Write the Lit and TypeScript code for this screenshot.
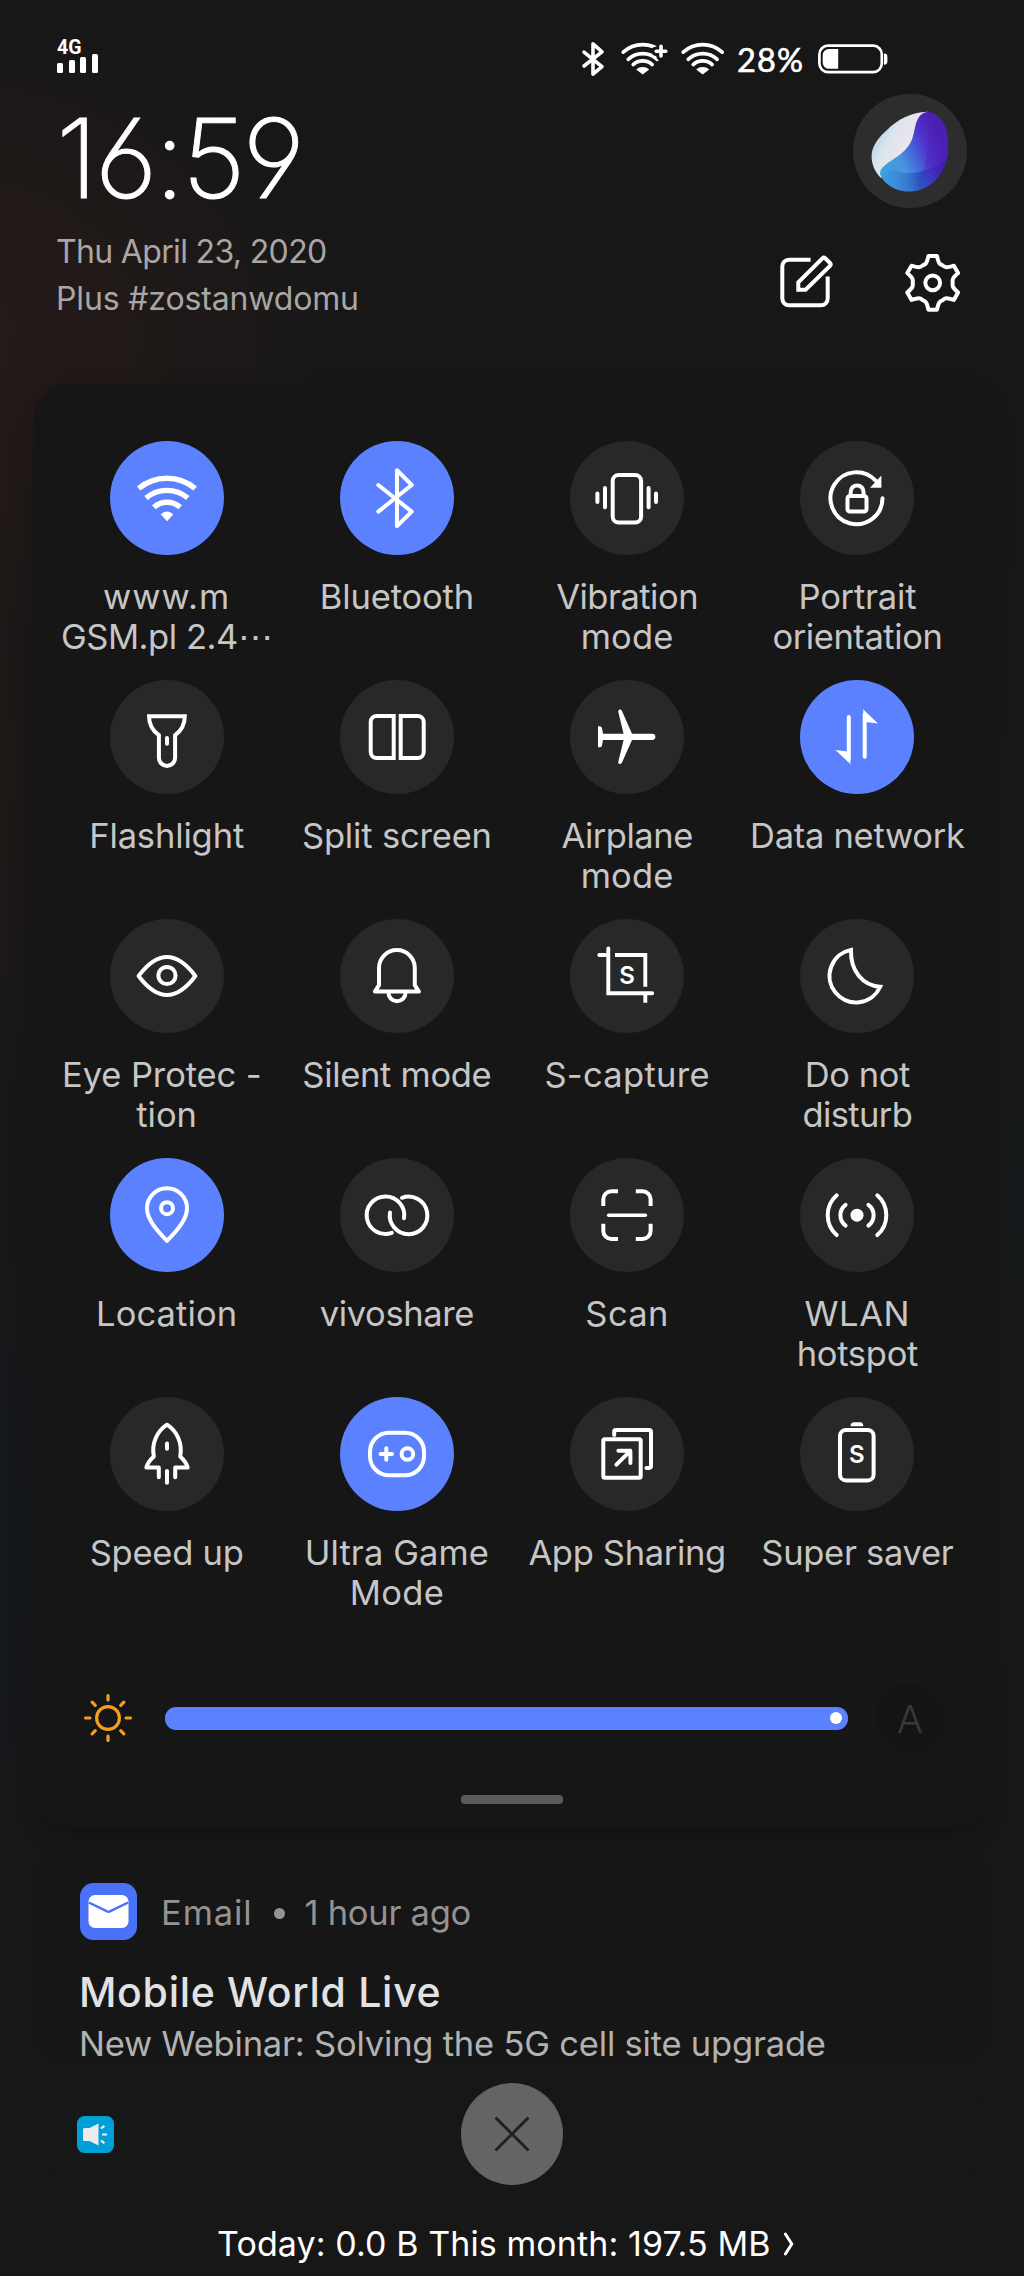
import { LitElement, html, svg, css, type SVGTemplateResult } from "lit";
import { customElement, property } from "lit/decorators.js";
import { classMap } from "lit/directives/class-map.js";

/** A line of label text and its letter spacing in pixels. */
type Line = [text: string, spacing: number];

interface Tile {
  icon: string;
  lines: Line[];
  on?: boolean;
}

const TILES: Tile[] = [
  { icon: "wifi", lines: [["www.m", 1], ["GSM.pl 2.4⋯", -0.46]], on: true },
  { icon: "bluetooth", lines: [["Bluetooth", -0.13]], on: true },
  { icon: "vibration", lines: [["Vibration", -0.5], ["mode", 0.2]] },
  { icon: "portrait", lines: [["Portrait", -0.2], ["orientation", -0.42]] },
  { icon: "flashlight", lines: [["Flashlight", -0.14]] },
  { icon: "split", lines: [["Split screen", -0.17]] },
  { icon: "airplane", lines: [["Airplane", -0.49], ["mode", 0.2]] },
  { icon: "data", lines: [["Data network", -0.26]], on: true },
  { icon: "eye", lines: [["Eye Protec -\u00a0", -0.1], ["tion", 0]] },
  { icon: "bell", lines: [["Silent mode", -0.31]] },
  { icon: "capture", lines: [["S-capture", 0.29]] },
  { icon: "moon", lines: [["Do not", -0.41], ["disturb", -0.6]] },
  { icon: "location", lines: [["Location", 0.1]], on: true },
  { icon: "share", lines: [["vivoshare", -0.4]] },
  { icon: "scan", lines: [["Scan", 0.4]] },
  { icon: "hotspot", lines: [["WLAN", 0.6], ["hotspot", -0.28]] },
  { icon: "rocket", lines: [["Speed up", -0.25]] },
  { icon: "game", lines: [["Ultra Game", 0.1], ["Mode", 0.34]], on: true },
  { icon: "appshare", lines: [["App Sharing", -0.33]] },
  { icon: "saver", lines: [["Super saver", -0.3]] },
];

/** Glyphs drawn on a 114 x 114 disc; strokes are 4 units unless set otherwise. */
const ICONS: Record<string, SVGTemplateResult> = {
  wifi: svg`<g stroke-width="5.4" stroke-linecap="butt">
      <path d="M28.6 47.5A44.2 44.2 0 0 1 85.2 47.5"/><path d="M36 57A32.6 32.6 0 0 1 77.8 57"/><path d="M43.8 66.2A20 20 0 0 1 70.2 66.2"/></g>
      <path class="solid" d="M50.8 73.6C54.5 69.3 59.5 69.3 63.2 73.6L57 80.2Z"/>`,
  bluetooth: svg`<path d="M38.3 44 71.7 70.6 57 85.2V29.2L71.7 44 38.3 70.6"/>`,
  vibration: svg`<rect x="42.7" y="34" width="28.4" height="47.6" rx="6"/>
      <path d="M35 47v19.3M27.4 52.6V61M78.6 47v19.3M86 52.6V61"/>`,
  portrait: svg`<path d="M82.5 57.2A26 26 0 1 1 75.6 39.6"/><path class="solid" d="M81.4 34.5V46.8H70Z"/>
      <rect x="47.5" y="55" width="19" height="15.6" rx="2.4"/><path d="M50.7 55v-4.2a6.4 6.4 0 0 1 12.8 0V55"/>`,
  flashlight: svg`<path stroke-linejoin="miter" d="M39 36.3H74.8C74.8 46 71 51 65.1 55.2V77.8a8.1 8.1 0 0 1-16.2 0V55.2C43 51 39 46 39 36.3Z"/><path d="M57 58v5.8"/>`,
  split: svg`<g stroke-linejoin="miter"><path d="M53.7 36V78H36.7a6 6 0 0 1-6-6V42a6 6 0 0 1 6-6Z"/>
      <path d="M60.7 36V78H77.7a6 6 0 0 0 6-6V42a6 6 0 0 0-6-6Z"/></g>`,
  airplane: svg`<path class="solid" d="M33 53.7H53.6L48.3 32C48 29.3 50.8 28.8 52 31L62 53.7H82.2a3.15 3.15 0 0 1 0 6.3H62L52 82.6C50.8 85 48 84.2 48.3 81.8L53.6 60H33L32 65.5C31.5 67.3 30 67.5 28 67.3V46.3C30 46 31.5 46.3 32 48Z"/>`,
  data: svg`<path d="M48.8 37V80M64.7 34V76.8"/>
      <path class="solid" d="M50.8 84.4 35.4 70 47.5 71.6ZM62.8 29 77.9 43.6 65.5 42Z"/>`,
  eye: svg`<path d="M28.6 57C38 44.5 47 38 57 38S76 44.5 85.4 57C76 69.5 67 76 57 76S38 69.5 28.6 57Z"/><circle cx="57" cy="56.5" r="8.6"/>`,
  bell: svg`<path d="M39 66.2V49a17.9 17.9 0 0 1 35.8 0V66.2L78.9 72.6H34.9Z"/><path d="M48.5 74a8.5 8.2 0 0 0 17 0"/>`,
  capture: svg`<g stroke-linejoin="miter" stroke-width="3.9"><path d="M38.3 29.5V74.3H82.2M29.3 36H35"/><path stroke-linecap="butt" d="M45 36H75.3V67.7M75.3 76V83.8"/></g>
      <text x="57" y="64.5" font-size="24" font-weight="600">S</text>`,
  moon: svg`<path stroke-linejoin="miter" d="M51 30.9A26.5 26.5 0 1 0 80.2 67.8C62.5 66.5 50.4 52 51 30.9Z"/>`,
  location: svg`<path d="M57 82.8C46 71.5 37 61 37 50.2a20 20 0 0 1 40 0C77 61 68 71.5 57 82.8Z"/><circle cx="57" cy="50.2" r="6"/>`,
  share: svg`<path d="M64 60.2A18.8 18.8 0 1 0 51.8 74.9"/><path d="M50 54.4A18.8 18.8 0 1 0 62 39.8"/>`,
  scan: svg`<path stroke-linecap="butt" d="M48 33.3H41.3a8 8 0 0 0-8 8V48M65.8 33.3H72.6a8 8 0 0 1 8 8V48M48 81H41.3a8 8 0 0 1-8-8V65.8M65.8 81H72.6a8 8 0 0 0 8-8V65.8"/><path stroke-width="3.4" d="M38.6 57.2H75.4"/>`,
  hotspot: svg`<circle class="solid" cx="57" cy="57.2" r="6.5"/>
      <path d="M45.6 46.8A13 13 0 0 0 45.6 67.6M68.4 46.8A13 13 0 0 1 68.4 67.6M36.7 37.3A26.5 26.5 0 0 0 36.7 77.1M77.3 37.3A26.5 26.5 0 0 1 77.3 77.1"/>`,
  rocket: svg`<path d="M48.8 80.2V70.6H36.3C37.2 66.6 39.8 63.2 43.8 59.5C41.2 45.5 47.5 34 57 27.7C66.5 34 72.8 45.5 70.2 59.5C74.2 63.2 76.8 66.6 77.7 70.6H65.2V80.2M57 74V85.8M57 46.6V51.8"/>`,
  game: svg`<rect x="30" y="35.7" width="54" height="42.6" rx="19"/><circle cx="67.4" cy="57" r="5.8"/><path d="M46.3 51.3V62.7M40.6 57H52"/>`,
  appshare: svg`<rect x="33.3" y="42.3" width="37.4" height="38.5" rx="1.5"/><path d="M44.2 38V34.4a1.5 1.5 0 0 1 1.5-1.5H79a2 2 0 0 1 2 2V69.4a1.5 1.5 0 0 1-1.5 1.5H76.4"/>
      <path d="M46.4 67.6 60.4 53.8M48.4 53.8H60.4V66"/>`,
  saver: svg`<rect x="40" y="33" width="33.6" height="50.4" rx="6"/><path class="solid" d="M50.5 29.2C50.5 26.5 52 25.3 54 25.3H60C62 25.3 63.3 26.5 63.3 29.2Z"/>
      <text x="56.9" y="66.4" font-size="24" font-weight="600">S</text>`,
};

@customElement("qs-tile")
class QsTile extends LitElement {
  @property({ attribute: false }) tile!: Tile;

  static styles = css`
    :host { display: flex; flex-direction: column; align-items: center; gap: 22px; }
    .disc { width: 114px; height: 114px; border-radius: 50%; background: #282828; }
    .disc.on { background: #5b81ff; }
    .glyph { display: block; width: 114px; height: 114px; fill: none; stroke: #fff; stroke-width: 4; stroke-linecap: round; stroke-linejoin: round; }
    .glyph .solid { fill: #fff; stroke: none; }
    .glyph text { fill: #fff; stroke: none; text-anchor: middle; font-family: Inter, sans-serif; }
    .label { font: 400 34.5px/40px Inter, "Liberation Sans", sans-serif; color: #c6c6c6; text-align: center; white-space: nowrap; }
  `;

  render() {
    const { icon, lines, on } = this.tile;
    return html`
      <div class=${classMap({ disc: true, on: !!on })}>
        <svg class="glyph" viewBox="0 0 114 114">${ICONS[icon]}</svg>
      </div>
      <div class="label">
        ${lines.map(([text, spacing]) => html`<div style="letter-spacing:${spacing}px">${text}</div>`)}
      </div>`;
  }
}

/** Outline of a six-lobed gear around (cx, cy). */
function gearPath(cx: number, cy: number): string {
  const at = (r: number, deg: number) => {
    const a = (deg * Math.PI) / 180;
    return `${(cx + r * Math.cos(a)).toFixed(2)} ${(cy + r * Math.sin(a)).toFixed(2)}`;
  };
  let d = "";
  for (let k = 0; k < 6; k++) {
    const a = -90 + k * 60;
    d += `${k ? "L" : "M"}${at(27.2, a - 9)}L${at(27.2, a + 9)}`;
    d += `C${at(20.2, a + 17)} ${at(19.8, a + 20)} ${at(20, a + 30)}`;
    d += `C${at(19.8, a + 40)} ${at(20.2, a + 43)} ${at(27.2, a + 51)}`;
  }
  return d + "Z";
}

const WIFI_ARCS = svg`
  <path d="M3.2 11.2A29 29 0 0 1 42.2 11.2M8.2 18.3A21.5 21.5 0 0 1 37.2 18.3M13.2 23.6A14 14 0 0 1 32.2 23.6"/>
  <path class="solid" d="M16.2 28.5C19.5 25.2 25.9 25.2 29.2 28.5L22.7 33.6Z"/>`;

@customElement("app-root")
class AppRoot extends LitElement {
  static styles = css`
    :host {
      display: block; width: 1024px; height: 2276px; overflow: hidden; color: #fff;
      font-family: Inter, "Liberation Sans", sans-serif; font-weight: 400;
      background:
        radial-gradient(420px 330px at -60px 330px, #271b19 0%, rgba(39, 27, 25, 0) 100%),
        radial-gradient(50px 420px at 0 760px, #201917 0%, rgba(32, 25, 23, 0) 100%),
        radial-gradient(120px 700px at 0 1550px, #15181b 0%, rgba(21, 24, 27, 0) 100%),
        radial-gradient(120px 900px at 1024px 1200px, #16191b 0%, rgba(22, 25, 27, 0) 100%),
        #171717;
    }
    svg { display: block; flex: none; fill: none; stroke: #fff; stroke-linecap: round; stroke-linejoin: round; }
    svg .solid { fill: #fff; stroke: none; }

    .status { display: flex; justify-content: space-between; height: 94px; padding: 0 136px 0 57px; box-sizing: border-box; }
    .cell { display: flex; flex-direction: column; align-items: flex-start; padding-top: 38px; }
    .net { font: 700 19.5px/19px Roboto, "Liberation Sans", sans-serif; }
    .bars { display: flex; align-items: flex-end; gap: 5.5px; height: 16px; }
    .bars i { width: 6px; border-radius: 1.5px; background: #fff; }
    .bars i:nth-child(1) { height: 10px; }
    .bars i:nth-child(2) { height: 13px; }
    .bars i:nth-child(3) { height: 16px; }
    .bars i:nth-child(4) { height: 19px; }
    .tray { display: flex; align-items: flex-start; padding-top: 41px; stroke-width: 3.6; }
    .tray .plus { margin-left: 15px; }
    .tray .wifi { margin-left: 10px; }
    .pct { width: 68px; margin-left: 11px; font: 400 32.5px/38px Lato, Inter, sans-serif; -webkit-text-stroke: 0.6px #fff; letter-spacing: 1.2px; white-space: nowrap; }
    .battery { margin-left: 12px; }

    .head { display: flex; justify-content: space-between; height: 290px; padding: 0 57px 0 57px; box-sizing: border-box; }
    .when { padding-top: 14px; }
    .clock { font-size: 110px; font-weight: 200; line-height: 100px; letter-spacing: -3px; -webkit-text-stroke: 1px #fff; font-feature-settings: "cv03", "cv04"; margin-left: -1px; }
    .date { margin: 20px 0 0 -1px; font-size: 32px; line-height: 47px; color: #a9a6a5; white-space: nowrap; }
    .date .day { letter-spacing: -0.66px; }
    .date .carrier { letter-spacing: -0.15px; }
    .side { display: flex; flex-direction: column; align-items: flex-end; }
    .avatar { width: 114px; height: 114px; border-radius: 50%; background: #2d2d2d; }
    .tools { display: flex; gap: 66px; margin: 43px 4px 0 0; stroke-width: 4; }

    .panel { margin: 0 34px; height: 1443px; padding: 57px 17px 0; box-sizing: border-box; border-radius: 34px; background: #161616; box-shadow: 0 8px 24px rgba(0, 0, 0, 0.2); }
    .grid { display: grid; grid-template-columns: repeat(4, 230.25px); grid-auto-rows: 239px; justify-content: center; }
    .bright { display: flex; align-items: center; margin: 48px 0 0 31px; }
    .sun { stroke: #f5a01d; }
    .track { display: flex; align-items: center; justify-content: flex-end; width: 683px; height: 23px; margin-left: 31px; padding-right: 6px; box-sizing: border-box; border-radius: 11px; background: #5b81ff; }
    .knob { width: 12px; height: 12px; border-radius: 50%; background: #fff; }
    .auto { width: 68px; height: 68px; margin-left: 28px; border-radius: 50%; background: #141414; color: #393939; font-size: 38.5px; font-weight: 300; line-height: 70px; text-align: center; }
    .grip { width: 102px; height: 9px; margin: 43px auto 0; border-radius: 4px; background: #5a5a5a; }

    .mail { height: 216px; margin: 20px 34px 0; padding: 36px 46px 0; box-sizing: border-box; border-radius: 34px; overflow: hidden; background: #161616; white-space: nowrap; }
    .from { display: flex; align-items: center; font-size: 34.5px; line-height: 57px; color: #939393; }
    .from span { position: relative; top: 1px; }
    .app { margin-left: 24px; letter-spacing: 0.9px; }
    .from .dot { width: 11px; height: 11px; margin: 2px 20px 0 21px; border-radius: 50%; background: #939393; }
    .ago { letter-spacing: -0.27px; }
    .subject { margin: 27px 0 0 -1px; font-size: 41px; font-weight: 500; line-height: 50px; letter-spacing: 0.7px; color: #e2e2e2; }
    .body { margin: 6px 0 0 -1px; font-size: 34.5px; line-height: 42px; letter-spacing: -0.2px; color: #b2b2b2; }

    .quiet { position: relative; display: flex; align-items: center; height: 90px; margin: 25px 34px 0; padding-left: 43px; box-sizing: border-box; border-radius: 34px; background: #161717; }
    .quiet svg { position: relative; top: 1px; }
    .quiet .close { position: absolute; left: 50%; top: 50%; width: 102px; height: 102px; margin: -50px 0 0 -51px; border-radius: 50%; background: #646464; stroke: #202020; }

    .usage { display: flex; align-items: center; gap: 12px; margin: 45px 0 0 217px; font-size: 34px; line-height: 41px; letter-spacing: 0.1px; white-space: nowrap; }
  `;

  render() {
    return html`
      <div class="status">
        <div class="cell">
          <span class="net">4G</span>
          <div class="bars"><i></i><i></i><i></i><i></i></div>
        </div>
        <div class="tray">
          <svg width="24" height="36"><path d="M3 11.2 21 25.6 12 33.2V2.8L21 10.8 3 25"/></svg>
          <svg class="plus" width="50" height="36">${WIFI_ARCS}
            <path d="M41 5V15.4M35.8 10.2H46.2" stroke="#171717" stroke-width="9"/>
            <path d="M41 5.4V15M36.2 10.2H45.8"/>
          </svg>
          <svg class="wifi" width="46" height="36">${WIFI_ARCS}</svg>
          <span class="pct">28%</span>
          <svg class="battery" width="71" height="36">
            <rect x="2.4" y="4.7" width="62.4" height="26.4" rx="8.5" stroke-width="2.7"/>
            <path class="solid" d="M21.2 8V27.8H12A6.3 6.3 0 0 1 5.7 21.5V14.3A6.3 6.3 0 0 1 12 8Z"/>
            <path class="solid" d="M67 12.5C69.5 12.5 70.4 13.5 70.4 15.5V20.5C70.4 22.5 69.5 23.7 67 23.7Z"/>
          </svg>
        </div>
      </div>

      <div class="head">
        <div class="when">
          <div class="clock">16:59</div>
          <div class="date">
            <div class="day">Thu April 23, 2020</div>
            <div class="carrier">Plus #zostanwdomu</div>
          </div>
        </div>
        <div class="side">
          <div class="avatar">
            <svg width="114" height="114" viewBox="0 0 114 114">
              <defs>
                <linearGradient id="wave" gradientUnits="userSpaceOnUse" x1="30" y1="76" x2="90" y2="50">
                  <stop offset="0" stop-color="#3f9fe0"/><stop offset=".3" stop-color="#4796df"/>
                  <stop offset=".55" stop-color="#4462d8"/><stop offset=".75" stop-color="#5130cc"/><stop offset="1" stop-color="#4b1fb0"/>
                </linearGradient>
                <linearGradient id="shell" gradientUnits="userSpaceOnUse" x1="22" y1="45" x2="50" y2="60">
                  <stop offset="0" stop-color="#b9dbea"/><stop offset=".45" stop-color="#dfe5ec"/><stop offset="1" stop-color="#e9e6ea"/>
                </linearGradient>
                <linearGradient id="shade" x1="0" y1="0" x2="1" y2="0">
                  <stop offset="0" stop-color="#1e6fc4" stop-opacity="0"/><stop offset=".6" stop-color="#1b2aa8" stop-opacity=".5"/><stop offset="1" stop-color="#3a0f9a" stop-opacity=".4"/>
                </linearGradient>
              </defs>
              <g stroke="none">
                <path fill="url(#shell)" d="M75 17.8C58 18 44 26 34 36C24 45 18.5 53 18.6 63C18.8 71 22 78 28 84L60 60Z"/>
                <path fill="url(#wave)" d="M75 17.8C89 20 95.6 34 95.4 52C95.4 78 78 97.6 56 97.6C42 97.6 31 90 27 80C27 74 33 70 40 65.5C50 59 56.5 53 59.5 44C62.5 36 62 19 75 17.8Z"/>
                <path fill="url(#shade)" d="M40 76C54 82 76 80 94 64C90 84 75 97.6 56 97.6C42 97.6 31 90 27 80Z"/>
                <path fill="#4a1fb8" fill-opacity=".35" d="M75 18C77 42 74 62 70 79C80 77.5 88 72 94 64C97 42 91 21 75 18Z"/>
              </g>
            </svg>
          </div>
          <div class="tools">
            <svg width="60" height="62">
              <path stroke-linecap="butt" d="M33.6 8.7H12a6.7 6.7 0 0 0-6.7 6.7V47.6a6.7 6.7 0 0 0 6.7 6.7H44a6.7 6.7 0 0 0 6.7-6.7V25.6"/>
              <path stroke-linejoin="miter" d="M21.3 38.7V31.4L45.4 7.3a2 2 0 0 1 2.8 0L53 12a2 2 0 0 1 0 2.8L28.6 38.7Z"/>
            </svg>
            <svg width="60" height="64"><path d=${gearPath(29.7, 31.8)}/><circle cx="29.7" cy="31.8" r="7.4"/></svg>
          </div>
        </div>
      </div>

      <div class="panel">
        <div class="grid">${TILES.map((tile) => html`<qs-tile .tile=${tile}></qs-tile>`)}</div>
        <div class="bright">
          <svg class="sun" width="52" height="52" viewBox="-26 -26 52 52" stroke-width="3.2">
            <circle r="11.4"/>
            ${[0, 45, 90, 135, 180, 225, 270, 315].map((a) => svg`<path d="M18 0H22.4" transform="rotate(${a})"/>`)}
          </svg>
          <div class="track"><div class="knob"></div></div>
          <div class="auto">A</div>
        </div>
        <div class="grip"></div>
      </div>

      <div class="mail">
        <div class="from">
          <svg width="57" height="57">
            <g stroke="none">
              <rect width="57" height="57" rx="13.5" fill="#4a72f8"/>
              <rect x="8.5" y="12" width="40" height="33" rx="6.5" fill="#fff"/>
            </g>
            <path d="M8.8 19.5 26.6 28.2a4 4 0 0 0 3.8 0L48.2 19.5" stroke="#4a72f8" stroke-width="2.4" stroke-linecap="butt"/>
          </svg>
          <span class="app">Email</span><span class="dot"></span><span class="ago">1 hour ago</span>
        </div>
        <div class="subject">Mobile World Live</div>
        <div class="body">New Webinar: Solving the 5G cell site upgrade</div>
      </div>

      <div class="quiet">
        <svg width="37" height="37">
          <rect width="37" height="37" rx="7.5" fill="#009fd8" stroke="none"/>
          <path fill="#ececec" stroke="none" d="M7.5 12H12.5L21.5 7.5V29.5L12.5 25H7.5A1.5 1.5 0 0 1 6 23.5V13.5A1.5 1.5 0 0 1 7.5 12Z"/>
          <path d="M25 18.5H30M24 12.5 27.4 9.8M24 24.5 27.4 27.2" stroke="#ececec" stroke-width="2.2" stroke-linecap="butt"/>
        </svg>
        <svg class="close" viewBox="0 0 102 102" stroke-width="3"><path stroke-linecap="butt" d="M34.5 34.5 67.5 67.5M67.5 34.5 34.5 67.5"/></svg>
      </div>

      <div class="usage">
        <span>Today: 0.0 B This month: 197.5 MB</span>
        <svg width="12" height="26"><path d="M2.4 3 8.8 13 2.4 23" stroke-width="3"/></svg>
      </div>
    `;
  }
}
